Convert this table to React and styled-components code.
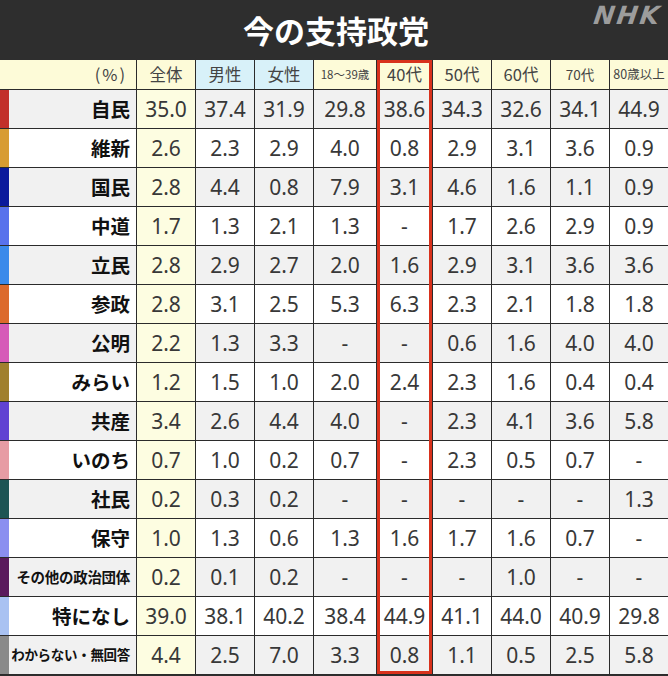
import React from 'react';
import styled, { createGlobalStyle } from 'styled-components';

const GlobalStyle = createGlobalStyle`
  html, body {
    margin: 0;
    padding: 0;
    background: #2e2e2e;
  }
  body {
    font-family: "Noto Sans", "Noto Sans CJK JP", sans-serif;
  }
`;

const Page = styled.div`
  width: 668px;
  background: #2e2e2e;
`;

const TitleBar = styled.div`
  height: 60px;
  display: grid;
  grid-template-columns: 1fr auto 1fr;
  align-items: center;
`;

const Title = styled.h1`
  grid-column: 2;
  margin: 0;
  color: #ffffff;
  font-family: "Noto Sans CJK JP", sans-serif;
  font-weight: 700;
  font-size: 31px;
  padding-left: 4px;
  padding-bottom: 2px;
`;

const Logo = styled.div`
  grid-column: 3;
  justify-self: end;
  align-self: start;
  margin: 1px 7px 0 0;
  color: #9c9c9c;
  font-family: "DejaVu Sans", sans-serif;
  font-weight: 900;
  font-style: italic;
  font-size: 25px;
  letter-spacing: 2px;
  transform: skewX(-8deg);
`;

const Table = styled.div`
  display: grid;
  grid-template-columns: 136px 58px 58px 58px 62px 55px 58px 58px 58px 1fr;
  grid-template-rows: 29px repeat(15, 38px);
  gap: 1px;
  padding-bottom: 1px;
  background: #2b2b2b;
`;

const Cell = styled.div`
  grid-row: ${p => p.$r};
  grid-column: ${p => p.$c};
  display: flex;
  align-items: center;
  justify-content: center;
  background: ${p => p.$bg};
  color: #383838;
  font-size: 21px;
  line-height: 1;
`;

const HeadCell = styled(Cell)`
  color: #444;
  font-size: ${p => p.$fs || 16.5}px;
  font-family: "Noto Sans CJK JP", sans-serif;
  justify-content: ${p => (p.$right ? 'flex-end' : 'center')};
  padding-right: ${p => (p.$right ? '9px' : '0')};
  letter-spacing: ${p => (p.$right ? '2px' : '0')};
`;

const Label = styled(Cell)`
  justify-content: flex-end;
  padding-right: 6px;
  border-left: 9px solid ${p => p.$color};
  color: #111;
  font-family: "Noto Sans CJK JP", sans-serif;
  font-weight: 700;
  font-size: ${p => p.$fs || 19.5}px;
  letter-spacing: ${p => (p.$fs ? '-0.3px' : '0')};
`;

const Highlight = styled.div`
  grid-column: 6;
  grid-row: 1 / -1;
  border: 3px solid #d8311c;
  z-index: 1;
  pointer-events: none;
`;

const YELLOW = '#fdfbd8';
const CYAN = '#d8f1f9';

const headers = [
  { t: '全体', bg: YELLOW },
  { t: '男性', bg: CYAN },
  { t: '女性', bg: CYAN },
  { t: '18〜39歳', bg: YELLOW, fs: 11.5 },
  { t: '40代', bg: YELLOW },
  { t: '50代', bg: YELLOW },
  { t: '60代', bg: YELLOW },
  { t: '70代', bg: YELLOW, fs: 13.5 },
  { t: '80歳以上', bg: YELLOW, fs: 12.5 },
];

const rows = [
  { name: '自民', color: '#c2302a', v: ['35.0', '37.4', '31.9', '29.8', '38.6', '34.3', '32.6', '34.1', '44.9'] },
  { name: '維新', color: '#d89c32', v: ['2.6', '2.3', '2.9', '4.0', '0.8', '2.9', '3.1', '3.6', '0.9'] },
  { name: '国民', color: '#0b1a9c', v: ['2.8', '4.4', '0.8', '7.9', '3.1', '4.6', '1.6', '1.1', '0.9'] },
  { name: '中道', color: '#5872ec', v: ['1.7', '1.3', '2.1', '1.3', '-', '1.7', '2.6', '2.9', '0.9'] },
  { name: '立民', color: '#3a8aea', v: ['2.8', '2.9', '2.7', '2.0', '1.6', '2.9', '3.1', '3.6', '3.6'] },
  { name: '参政', color: '#dc6a2c', v: ['2.8', '3.1', '2.5', '5.3', '6.3', '2.3', '2.1', '1.8', '1.8'] },
  { name: '公明', color: '#d65ab8', v: ['2.2', '1.3', '3.3', '-', '-', '0.6', '1.6', '4.0', '4.0'] },
  { name: 'みらい', color: '#a0802e', v: ['1.2', '1.5', '1.0', '2.0', '2.4', '2.3', '1.6', '0.4', '0.4'] },
  { name: '共産', color: '#6042d2', v: ['3.4', '2.6', '4.4', '4.0', '-', '2.3', '4.1', '3.6', '5.8'] },
  { name: 'いのち', color: '#e79ca4', v: ['0.7', '1.0', '0.2', '0.7', '-', '2.3', '0.5', '0.7', '-'] },
  { name: '社民', color: '#1d5454', v: ['0.2', '0.3', '0.2', '-', '-', '-', '-', '-', '1.3'] },
  { name: '保守', color: '#8b8ff0', v: ['1.0', '1.3', '0.6', '1.3', '1.6', '1.7', '1.6', '0.7', '-'] },
  { name: 'その他の政治団体', color: '#5a1a5c', fs: 14.5, v: ['0.2', '0.1', '0.2', '-', '-', '-', '1.0', '-', '-'] },
  { name: '特になし', color: '#a9c2f2', v: ['39.0', '38.1', '40.2', '38.4', '44.9', '41.1', '44.0', '40.9', '29.8'] },
  { name: 'わからない・無回答', color: '#8a8a8a', fs: 13.5, v: ['4.4', '2.5', '7.0', '3.3', '0.8', '1.1', '0.5', '2.5', '5.8'] },
];

export default function App() {
  return (
    <Page>
      <GlobalStyle />
      <TitleBar>
        <Title>今の支持政党</Title>
        <Logo>NHK</Logo>
      </TitleBar>
      <Table>
        <HeadCell $r={1} $c={1} $bg={YELLOW} $right>(%)</HeadCell>
        {headers.map((h, i) => (
          <HeadCell key={h.t} $r={1} $c={i + 2} $bg={h.bg} $fs={h.fs}>
            {h.t}
          </HeadCell>
        ))}
        {rows.map((row, ri) => {
          const shade = ri % 2 === 0 ? '#f1f1f1' : '#ffffff';
          return (
            <React.Fragment key={row.name}>
              <Label $r={ri + 2} $c={1} $bg={shade} $color={row.color} $fs={row.fs}>
                {row.name}
              </Label>
              {row.v.map((val, ci) => (
                <Cell
                  key={ci}
                  $r={ri + 2}
                  $c={ci + 2}
                  $bg={ci === 0 ? '#fdfde1' : shade}
                >
                  {val}
                </Cell>
              ))}
            </React.Fragment>
          );
        })}
        <Highlight />
      </Table>
    </Page>
  );
}
